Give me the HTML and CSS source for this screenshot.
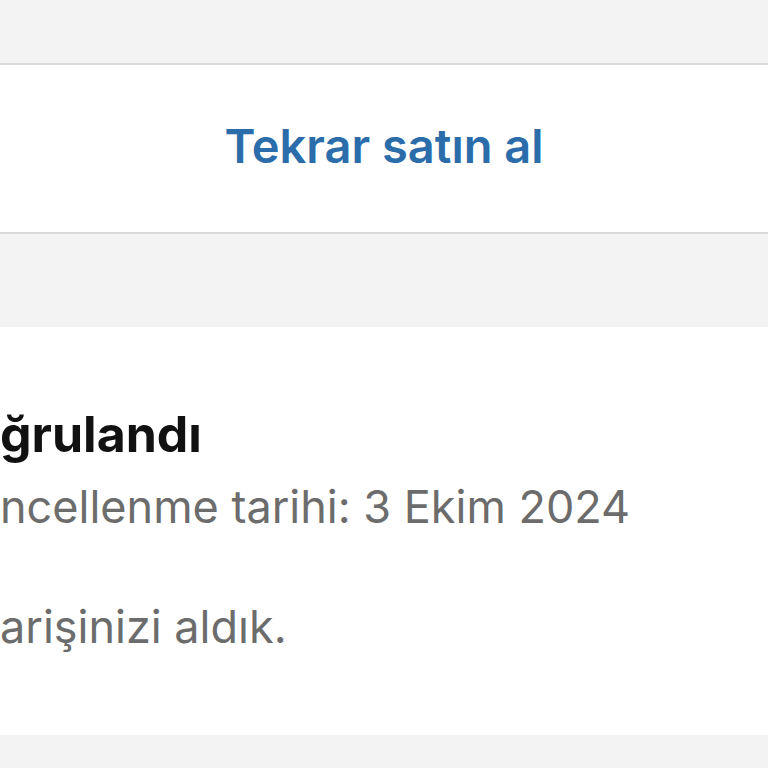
FILE: index.html
```html
<!DOCTYPE html>
<html lang="tr">
<head>
	<meta charset="UTF-8" />
	<title>Sipariş</title>
	<link rel="stylesheet" href="styles.css">
</head>
<body>
	<div class="top-gap"></div>
	<div class="action-row">
		<a href="#" class="rebuy">Tekrar satın al</a>
	</div>
	<div class="mid-gap"></div>
	<div class="status-card">
		<h2 class="status-title">ğrulandı</h2>
		<p class="status-date">ncellenme tarihi: 3 Ekim 2024</p>
		<p class="status-note">arişinizi aldık.</p>
	</div>
</body>
</html>
```

FILE: styles.css
```css
html, body{
	margin:0;
	padding:0;
}
body{
	background:#f3f3f3;
	font-family:Inter, "Noto Sans", "Liberation Sans", sans-serif;
	height:768px;
	overflow:hidden;
}
.top-gap{
	height:63px;
}
.action-row{
	background:#fff;
	border-top:2px solid #d9d9d9;
	border-bottom:2px solid #d9d9d9;
	height:171px;
	box-sizing:border-box;
	padding-bottom:6px;
	display:flex;
	align-items:center;
	justify-content:center;
}
.rebuy{
	color:#2b6dab;
	font-size:47px;
	font-weight:600;
	text-decoration:none;
}
.mid-gap{
	height:93px;
}
.status-card{
	background:#fff;
	height:408px;
	padding-top:79px;
	box-sizing:border-box;
}
.status-title{
	margin:0;
	font-size:50px;
	font-weight:700;
	color:#111;
	line-height:56px;
}
.status-date{
	margin:19px 0 0;
	font-size:45px;
	color:#6c6c6c;
	line-height:52px;
}
.status-note{
	margin:68px 0 0;
	font-size:45px;
	color:#6c6c6c;
	line-height:52px;
}
```
